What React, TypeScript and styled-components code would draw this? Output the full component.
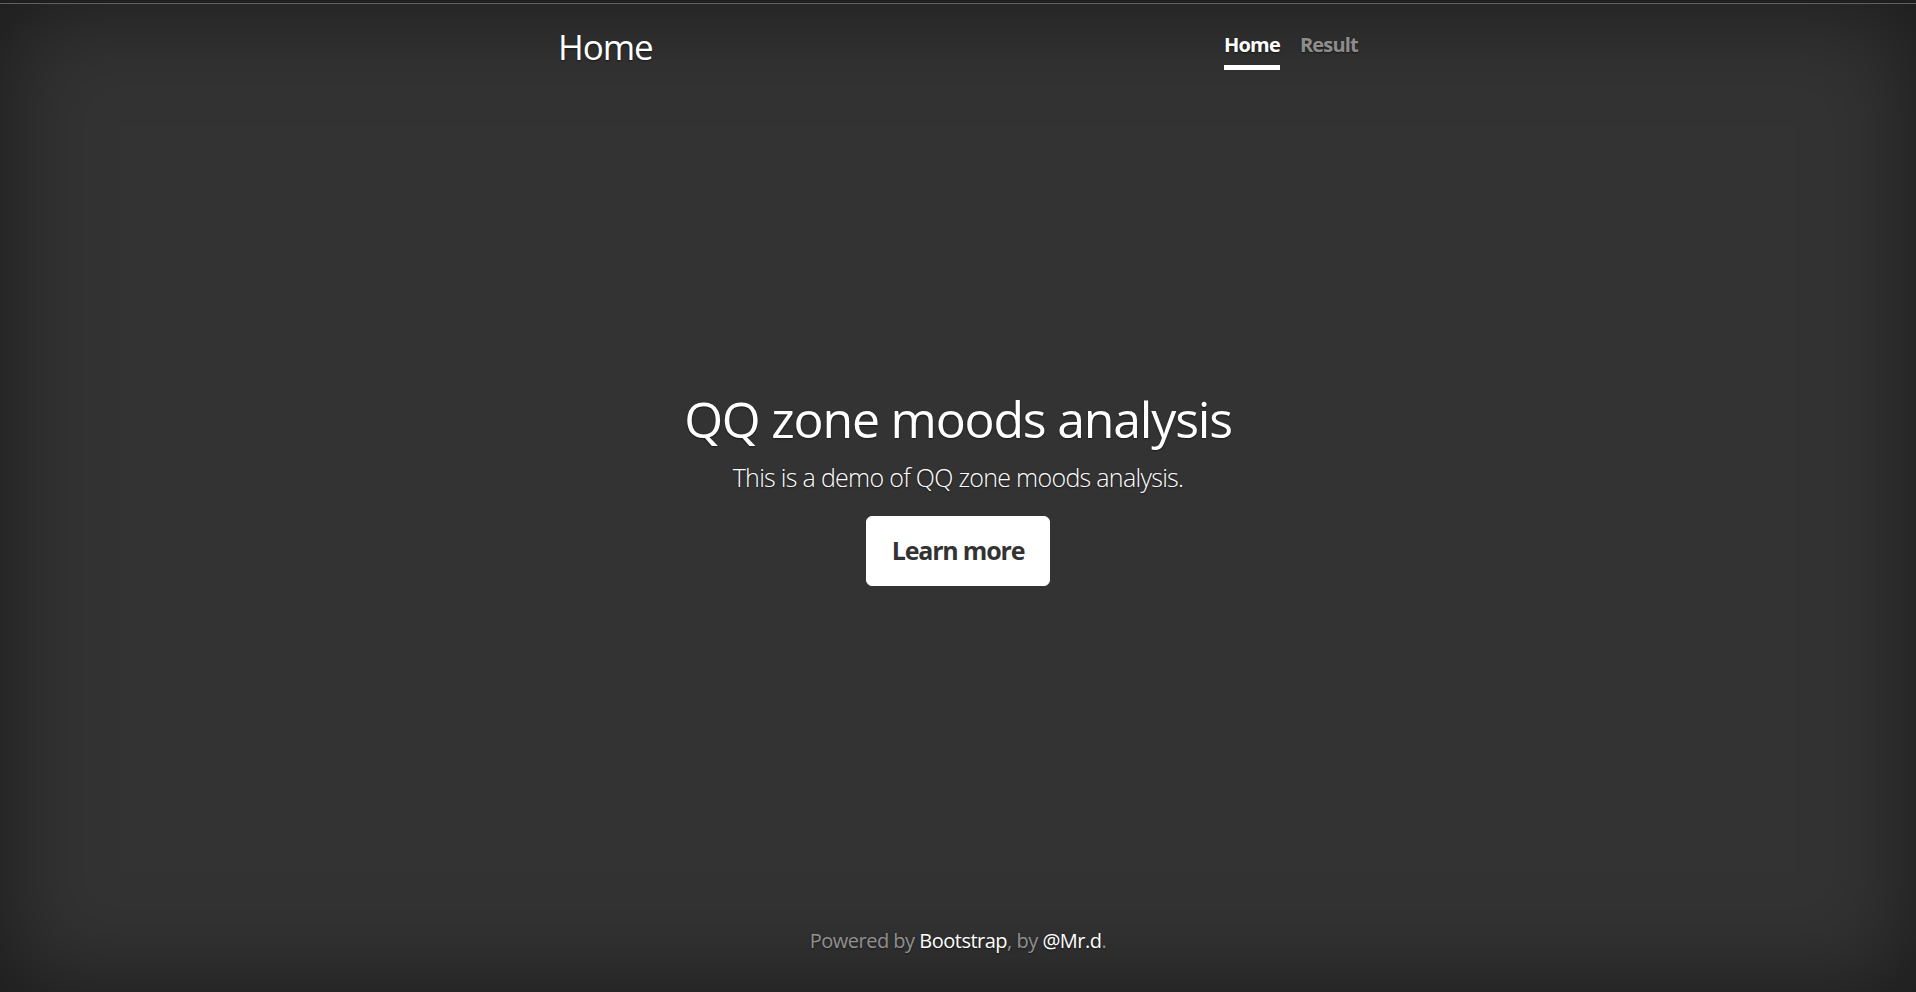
import React from "react";
import styled, { createGlobalStyle } from "styled-components";

const GlobalStyle = createGlobalStyle`
  html, body {
    margin: 0;
    padding: 0;
    height: 100%;
  }
  body {
    background-color: #333;
    color: #fff;
    font-family: "Open Sans", "Noto Sans", "Liberation Sans", sans-serif;
    text-shadow: 0 1px 2px rgba(0, 0, 0, 0.5);
    overflow: hidden;
  }
  * { box-sizing: border-box; }
`;

const Page = styled.div`
  display: flex;
  flex-direction: column;
  height: 100vh;
`;

const ChromeStrip = styled.div`
  flex: 0 0 4px;
  background: #1f1f1f;
  border-bottom: 1px solid #5f5f5f;
`;

const Viewport = styled.div`
  flex: 1;
  box-shadow: inset 0 0 100px rgba(0, 0, 0, 0.5);
  display: flex;
`;

const CoverContainer = styled.div`
  width: 100%;
  max-width: 840px;
  margin: 0 auto;
  padding: 20px;
  display: flex;
  flex-direction: column;
`;

const Masthead = styled.header`
  display: flex;
  justify-content: space-between;
  align-items: flex-start;
  margin-bottom: auto;
`;

const Brand = styled.h3`
  margin: 2px 0 0;
  font-size: 35px;
  font-weight: 400;
  line-height: 1.2;
  letter-spacing: -1.1px;
`;

const Nav = styled.nav`
  display: flex;
  gap: 20px;
  margin-top: 1px;
`;

const NavLink = styled.a<{ $active?: boolean }>`
  padding: 5px 0;
  font-size: 20px;
  line-height: 30px;
  font-weight: 700;
  letter-spacing: -0.8px;
  text-decoration: none;
  color: ${(p) => (p.$active ? "#fff" : "rgba(255, 255, 255, 0.5)")};
  border-bottom: 5px solid ${(p) => (p.$active ? "#fff" : "transparent")};
`;

const Inner = styled.main`
  padding: 0 20px 2px;
  text-align: center;
`;

const Heading = styled.h1`
  margin: 0 0 10px;
  font-size: 50px;
  font-weight: 400;
  line-height: 1.2;
  letter-spacing: -1.2px;
`;

const Lead = styled.p`
  margin: 0 0 20px;
  font-size: 25px;
  font-weight: 300;
  line-height: 1.5;
  letter-spacing: -0.7px;
`;

const ButtonRow = styled.p`
  margin: 0 0 20px;
  line-height: 0;
`;

const LearnButton = styled.a`
  display: inline-block;
  padding: 15px 25px;
  font-size: 25px;
  line-height: 1.5;
  font-weight: 700;
  letter-spacing: -1.2px;
  color: #333;
  background: #fff;
  border: 1px solid #fff;
  border-radius: 6px;
  text-shadow: none;
  text-decoration: none;
`;

const Mastfoot = styled.footer`
  margin-top: auto;
  text-align: center;
  color: rgba(255, 255, 255, 0.5);
`;

const FootText = styled.p`
  margin: 0 0 16px;
  font-size: 20px;
  line-height: 1.5;
  letter-spacing: -0.5px;
`;

const FootLink = styled.a`
  color: #fff;
  text-decoration: none;
`;

export default function App() {
  return (
    <>
      <GlobalStyle />
      <Page>
        <ChromeStrip />
        <Viewport>
          <CoverContainer>
            <Masthead>
              <Brand>Home</Brand>
              <Nav>
                <NavLink $active href="#">Home</NavLink>
                <NavLink href="#">Result</NavLink>
              </Nav>
            </Masthead>
            <Inner>
              <Heading>QQ zone moods analysis</Heading>
              <Lead>This is a demo of QQ zone moods analysis.</Lead>
              <ButtonRow>
                <LearnButton href="#">Learn more</LearnButton>
              </ButtonRow>
            </Inner>
            <Mastfoot>
              <FootText>
                Powered by <FootLink href="#">Bootstrap</FootLink>, by{" "}
                <FootLink href="#">@Mr.d</FootLink>.
              </FootText>
            </Mastfoot>
          </CoverContainer>
        </Viewport>
      </Page>
    </>
  );
}
